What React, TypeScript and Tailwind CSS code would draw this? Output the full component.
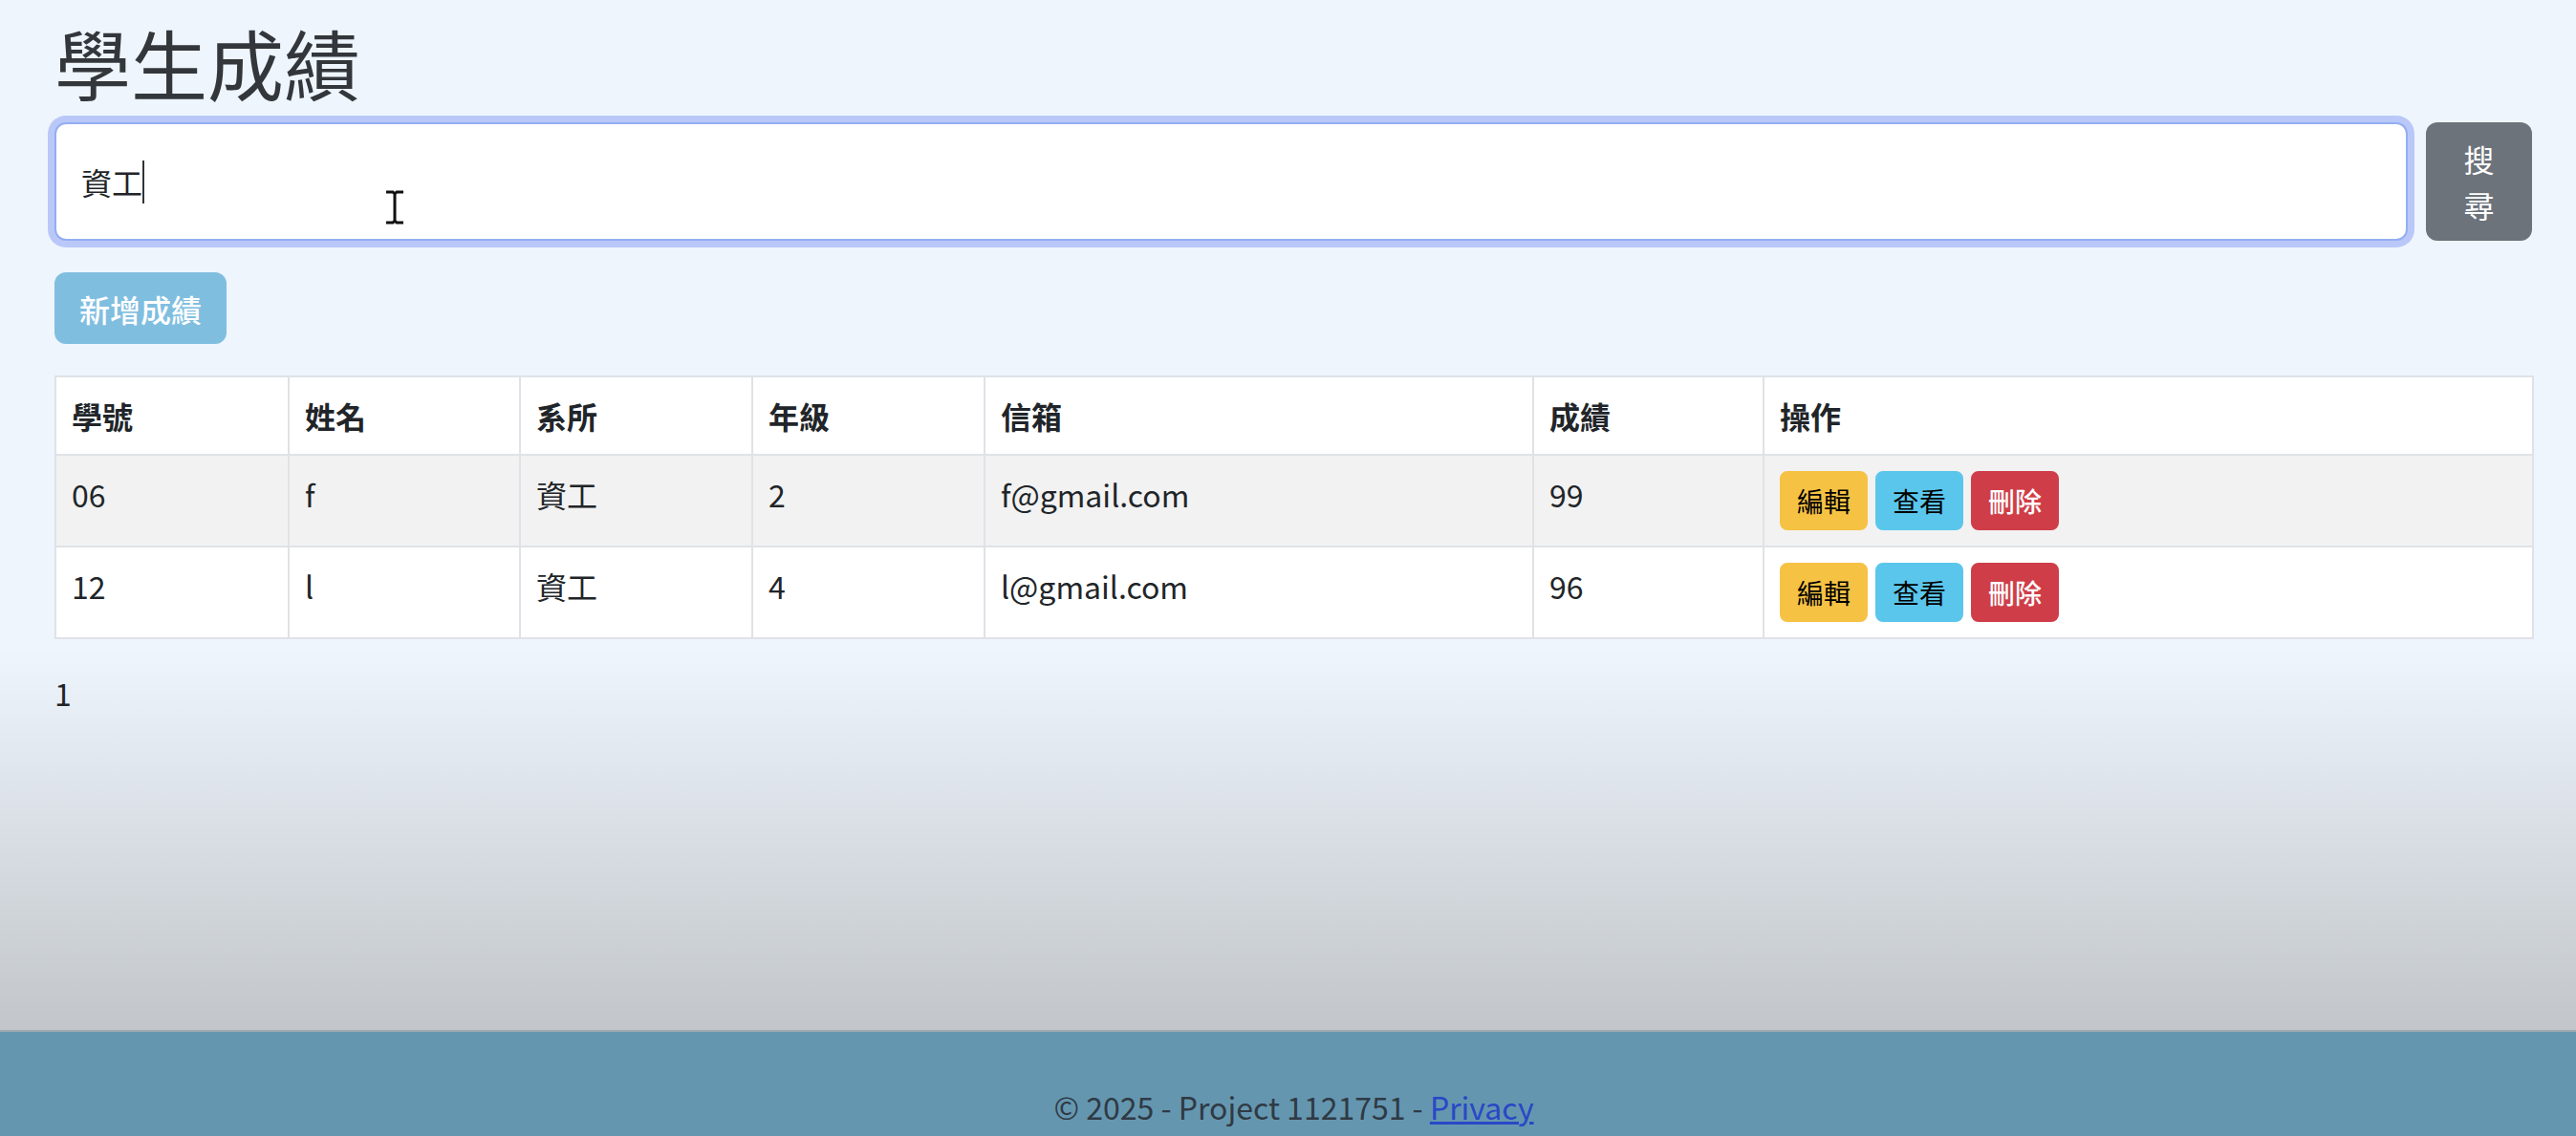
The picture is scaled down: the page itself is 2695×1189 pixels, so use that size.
const rows = [
  { id: "06", name: "f", dept: "資工", grade: "2", email: "f@gmail.com", score: "99" },
  { id: "12", name: "l", dept: "資工", grade: "4", email: "l@gmail.com", score: "96" },
];

const heads = [
  { label: "學號", w: "w-[244px]" },
  { label: "姓名", w: "w-[242px]" },
  { label: "系所", w: "w-[243px]" },
  { label: "年級", w: "w-[243px]" },
  { label: "信箱", w: "w-[574px]" },
  { label: "成績", w: "w-[241px]" },
  { label: "操作", w: "w-[805px]" },
];

const cell = "border-2 border-[#dfe2e6] px-4 py-4 align-top leading-[48px]";

function IBeam() {
  return (
    <svg width="20" height="36" viewBox="0 0 20 36" className="absolute left-[344px] top-[69px]">
      <path d="M1 2h7l2 2 2-2h7M10 4v28M1 34h7l2-2 2 2h7" stroke="#111" strokeWidth="3" fill="none" />
    </svg>
  );
}

export default function App() {
  return (
    <div className="flex h-[1189px] flex-col overflow-hidden font-['Noto_Sans_CJK_TC','Noto_Sans',sans-serif] text-[32px] text-[#212529]">
      <main className="h-[1078px] shrink-0 bg-[linear-gradient(to_bottom,#eef5fd_0%,#eef5fd_63%,#c2c6ca_100%)]">
        <div className="ml-[57px] w-[2592px] pt-4">
          <h1 className="mb-4 text-[80px] leading-[96px] font-normal text-[#33373b]">學生成績</h1>

          <div className="flex h-[124px] gap-[19px]">
            <div className="relative flex flex-1 items-center rounded-xl border-2 border-[#93aef2] bg-white pl-[26px] shadow-[0_0_0_7px_#b9c8f8]">
              <span className="leading-[48px] text-[#212529]">資工</span>
              <span className="inline-block h-[45px] w-[2px] bg-[#333]" />
              <IBeam />
            </div>
            <button className="w-[111px] rounded-xl bg-[#6c737b] px-6 leading-[48px] text-white">搜尋</button>
          </div>

          <button className="mt-[33px] h-[75px] rounded-xl border-2 border-[#80bee0] bg-[#80bee0] px-6 leading-[48px] font-medium text-white">
            新增成績
          </button>

          <table className="mt-[33px] w-[2592px] table-fixed border-collapse bg-white">
            <thead>
              <tr>
                {heads.map((h) => (
                  <th key={h.label} className={`${h.w} ${cell} text-left font-bold`}>
                    {h.label}
                  </th>
                ))}
              </tr>
            </thead>
            <tbody>
              {rows.map((r, i) => (
                <tr key={r.id} className={i === 0 ? "bg-[#f2f2f2]" : "bg-white"}>
                  <td className={cell}>{r.id}</td>
                  <td className={cell}>{r.name}</td>
                  <td className={cell}>{r.dept}</td>
                  <td className={cell}>{r.grade}</td>
                  <td className={cell}>{r.email}</td>
                  <td className={cell}>{r.score}</td>
                  <td className={cell}>
                    <div className="flex gap-2 text-[28px] leading-[42px]">
                      <button className="h-[62px] rounded-lg border-2 border-[#f6c244] bg-[#f6c244] px-4 text-black">編輯</button>
                      <button className="h-[62px] rounded-lg border-2 border-[#5bc6ec] bg-[#5bc6ec] px-4 text-black">查看</button>
                      <button className="h-[62px] rounded-lg border-2 border-[#cf3e48] bg-[#cf3e48] px-4 font-medium text-white">刪除</button>
                    </div>
                  </td>
                </tr>
              ))}
            </tbody>
          </table>

          <p className="mt-[32px] leading-[48px]">1</p>
        </div>
      </main>

      <footer className="flex-1 border-t-2 border-[#9fa9b0] bg-[#6596b0] pl-[12px] pt-[54px] text-center leading-[48px] text-[#2f3a44]">
        © 2025 - Project 1121751 - <a href="#" className="text-[#2848c6] underline">Privacy</a>
      </footer>
    </div>
  );
}
